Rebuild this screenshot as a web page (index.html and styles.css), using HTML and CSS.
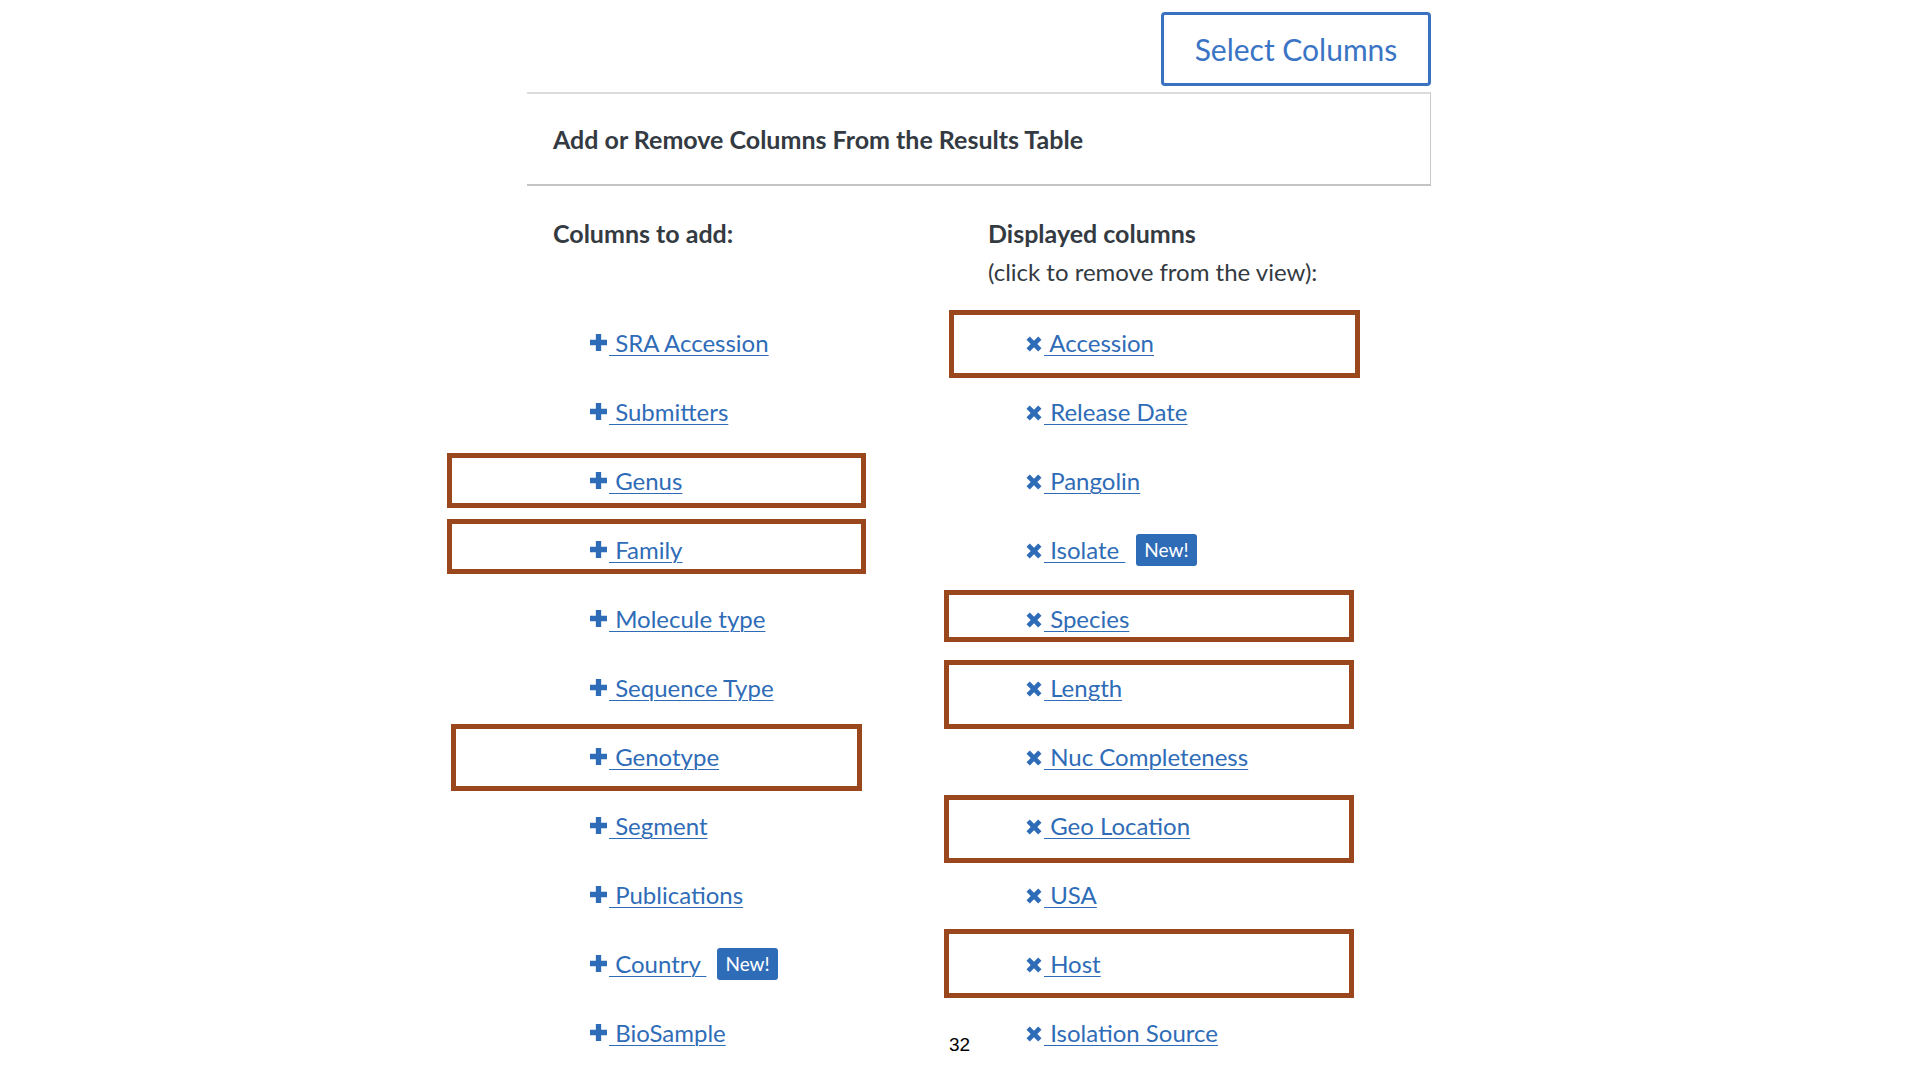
FILE: index.html
```html
<!DOCTYPE html>
<html lang="en">
<head>
<meta charset="utf-8">
<title>Select Columns</title>
<link rel="stylesheet" href="styles.css">
</head>
<body>
<div class="page">
  <div class="toolbar">
    <button class="select-btn" type="button">Select Columns</button>
  </div>
  <div class="panel">
    <h2 class="panel-title">Add or Remove Columns From the Results Table</h2>
  </div>
  <div class="columns">
    <div class="col col-add">
      <div class="col-head"><strong>Columns to add:</strong></div>
      <ul class="items">
        <li class="row"><a href="#"><svg class="ico" viewBox="0 0 16 16"><path d="M5.5 0h5v5.5H16v5h-5.5V16h-5v-5.5H0v-5h5.5z"/></svg> SRA Accession</a></li>
        <li class="row"><a href="#"><svg class="ico" viewBox="0 0 16 16"><path d="M5.5 0h5v5.5H16v5h-5.5V16h-5v-5.5H0v-5h5.5z"/></svg> Submitters</a></li>
        <li class="row"><span class="mark ml m-b"></span><a href="#"><svg class="ico" viewBox="0 0 16 16"><path d="M5.5 0h5v5.5H16v5h-5.5V16h-5v-5.5H0v-5h5.5z"/></svg> Genus</a></li>
        <li class="row"><span class="mark ml m-c"></span><a href="#"><svg class="ico" viewBox="0 0 16 16"><path d="M5.5 0h5v5.5H16v5h-5.5V16h-5v-5.5H0v-5h5.5z"/></svg> Family</a></li>
        <li class="row"><a href="#"><svg class="ico" viewBox="0 0 16 16"><path d="M5.5 0h5v5.5H16v5h-5.5V16h-5v-5.5H0v-5h5.5z"/></svg> Molecule type</a></li>
        <li class="row"><a href="#"><svg class="ico" viewBox="0 0 16 16"><path d="M5.5 0h5v5.5H16v5h-5.5V16h-5v-5.5H0v-5h5.5z"/></svg> Sequence Type</a></li>
        <li class="row"><span class="mark ml2 m-d"></span><a href="#"><svg class="ico" viewBox="0 0 16 16"><path d="M5.5 0h5v5.5H16v5h-5.5V16h-5v-5.5H0v-5h5.5z"/></svg> Genotype</a></li>
        <li class="row"><a href="#"><svg class="ico" viewBox="0 0 16 16"><path d="M5.5 0h5v5.5H16v5h-5.5V16h-5v-5.5H0v-5h5.5z"/></svg> Segment</a></li>
        <li class="row"><a href="#"><svg class="ico" viewBox="0 0 16 16"><path d="M5.5 0h5v5.5H16v5h-5.5V16h-5v-5.5H0v-5h5.5z"/></svg> Publications</a></li>
        <li class="row"><a href="#"><svg class="ico" viewBox="0 0 16 16"><path d="M5.5 0h5v5.5H16v5h-5.5V16h-5v-5.5H0v-5h5.5z"/></svg> Country&nbsp;</a><span class="badge">New!</span></li>
        <li class="row"><a href="#"><svg class="ico" viewBox="0 0 16 16"><path d="M5.5 0h5v5.5H16v5h-5.5V16h-5v-5.5H0v-5h5.5z"/></svg> BioSample</a></li>
      </ul>
    </div>
    <div class="col col-shown">
      <div class="col-head"><strong>Displayed columns</strong><br>(click to remove from the view):</div>
      <ul class="items">
        <li class="row"><span class="mark mr2 m-a"></span><a href="#"><svg class="ico x" viewBox="0 0 16 16"><path d="M0.5 3.8 3.8 0.5 8 4.7l4.2-4.2 3.3 3.3L11.3 8l4.2 4.2-3.3 3.3L8 11.3l-4.2 4.2-3.3-3.3L4.7 8z"/></svg> Accession</a></li>
        <li class="row"><a href="#"><svg class="ico x" viewBox="0 0 16 16"><path d="M0.5 3.8 3.8 0.5 8 4.7l4.2-4.2 3.3 3.3L11.3 8l4.2 4.2-3.3 3.3L8 11.3l-4.2 4.2-3.3-3.3L4.7 8z"/></svg> Release Date</a></li>
        <li class="row"><a href="#"><svg class="ico x" viewBox="0 0 16 16"><path d="M0.5 3.8 3.8 0.5 8 4.7l4.2-4.2 3.3 3.3L11.3 8l4.2 4.2-3.3 3.3L8 11.3l-4.2 4.2-3.3-3.3L4.7 8z"/></svg> Pangolin</a></li>
        <li class="row"><a href="#"><svg class="ico x" viewBox="0 0 16 16"><path d="M0.5 3.8 3.8 0.5 8 4.7l4.2-4.2 3.3 3.3L11.3 8l4.2 4.2-3.3 3.3L8 11.3l-4.2 4.2-3.3-3.3L4.7 8z"/></svg> Isolate&nbsp;</a><span class="badge">New!</span></li>
        <li class="row"><span class="mark mr m-e"></span><a href="#"><svg class="ico x" viewBox="0 0 16 16"><path d="M0.5 3.8 3.8 0.5 8 4.7l4.2-4.2 3.3 3.3L11.3 8l4.2 4.2-3.3 3.3L8 11.3l-4.2 4.2-3.3-3.3L4.7 8z"/></svg> Species</a></li>
        <li class="row"><span class="mark mr m-f"></span><a href="#"><svg class="ico x" viewBox="0 0 16 16"><path d="M0.5 3.8 3.8 0.5 8 4.7l4.2-4.2 3.3 3.3L11.3 8l4.2 4.2-3.3 3.3L8 11.3l-4.2 4.2-3.3-3.3L4.7 8z"/></svg> Length</a></li>
        <li class="row"><a href="#"><svg class="ico x" viewBox="0 0 16 16"><path d="M0.5 3.8 3.8 0.5 8 4.7l4.2-4.2 3.3 3.3L11.3 8l4.2 4.2-3.3 3.3L8 11.3l-4.2 4.2-3.3-3.3L4.7 8z"/></svg> Nuc Completeness</a></li>
        <li class="row"><span class="mark mr m-g"></span><a href="#"><svg class="ico x" viewBox="0 0 16 16"><path d="M0.5 3.8 3.8 0.5 8 4.7l4.2-4.2 3.3 3.3L11.3 8l4.2 4.2-3.3 3.3L8 11.3l-4.2 4.2-3.3-3.3L4.7 8z"/></svg> Geo Location</a></li>
        <li class="row"><a href="#"><svg class="ico x" viewBox="0 0 16 16"><path d="M0.5 3.8 3.8 0.5 8 4.7l4.2-4.2 3.3 3.3L11.3 8l4.2 4.2-3.3 3.3L8 11.3l-4.2 4.2-3.3-3.3L4.7 8z"/></svg> USA</a></li>
        <li class="row"><span class="mark mr m-h"></span><a href="#"><svg class="ico x" viewBox="0 0 16 16"><path d="M0.5 3.8 3.8 0.5 8 4.7l4.2-4.2 3.3 3.3L11.3 8l4.2 4.2-3.3 3.3L8 11.3l-4.2 4.2-3.3-3.3L4.7 8z"/></svg> Host</a></li>
        <li class="row"><a href="#"><svg class="ico x" viewBox="0 0 16 16"><path d="M0.5 3.8 3.8 0.5 8 4.7l4.2-4.2 3.3 3.3L11.3 8l4.2 4.2-3.3 3.3L8 11.3l-4.2 4.2-3.3-3.3L4.7 8z"/></svg> Isolation Source</a></li>
      </ul>
    </div>
  </div>
</div>
<div class="slide-num">32</div>
</body>
</html>
```
FILE: styles.css
```css
html, body {
  margin: 0;
  padding: 0;
  background: #fff;
}
body {
  font-family: Lato, "Open Sans", sans-serif;
  color: #343a42;
  width: 1920px;
  height: 1080px;
  overflow: hidden;
  position: relative;
}
.page {
  width: 904px;
  margin-left: 527px;
}
.toolbar {
  display: flex;
  justify-content: flex-end;
  padding-top: 12px;
}
.select-btn {
  width: 270px;
  height: 74px;
  border: 3px solid #3a72c0;
  border-radius: 4px;
  background: #fff;
  color: #3a74c4;
  font-family: Lato, "Open Sans", sans-serif;
  font-size: 30px;
  padding: 0;
}
.panel {
  margin-top: 6px;
  height: 90px;
  border-top: 2px solid #dcdcdc;
  border-right: 1px solid #c8c8c8;
  border-bottom: 2px solid #c4c4c4;
  display: flex;
  align-items: center;
  padding-left: 26px;
}
.panel-title {
  margin: 0;
  font-size: 25px;
  font-weight: 700;
  color: #343a42;
}
.columns {
  display: grid;
  grid-template-columns: 461px 1fr;
  padding-top: 28px;
}
.col-head {
  font-size: 24px;
  line-height: 38px;
  height: 76px;
  margin-bottom: 18px;
}
.col-add .col-head {
  padding-left: 26px;
}
.col-head strong {
  font-weight: 700;
  font-size: 25px;
}
.items {
  list-style: none;
  margin: 0;
  padding: 0;
}
.row {
  position: relative;
  height: 69px;
  display: flex;
  align-items: center;
  font-size: 24px;
}
.col-add .row {
  padding-left: 63px;
}
.col-shown .row {
  padding-left: 38px;
}
.row a {
  color: #2f6cb7;
  text-decoration: underline;
  text-decoration-thickness: 1px;
  text-underline-offset: 3px;
  position: relative;
}
.ico {
  width: 17px;
  height: 17px;
  fill: #2f6cb7;
  vertical-align: 1px;
  margin-right: 2px;
}
.ico.x {
  width: 16px;
  height: 16px;
  vertical-align: 0;
}
.badge {
  margin-left: 11px;
  background: #2f6cb7;
  color: #fff;
  font-size: 19px;
  height: 32px;
  line-height: 32px;
  padding: 0 8px;
  border-radius: 3px;
}
.mark {
  position: absolute;
  border: 5px solid #9a471d;
  box-sizing: border-box;
}
.ml { left: -80px; width: 419px; }
.ml2 { left: -76px; width: 411px; }
.mr { left: -44px; width: 410px; }
.mr2 { left: -39px; width: 411px; }
.m-a { top: 2px; height: 68px; }
.m-b { top: 7px; height: 55px; }
.m-c { top: 4px; height: 55px; }
.m-d { top: 2px; height: 67px; }
.m-e { top: 6px; height: 52px; }
.m-f { top: 7px; height: 69px; }
.m-g { top: 4px; height: 68px; }
.m-h { top: 0; height: 69px; }
.slide-num {
  position: absolute;
  left: 949px;
  top: 1034px;
  font-family: "Liberation Sans", Arial, sans-serif;
  font-size: 19px;
  color: #000;
}
```
